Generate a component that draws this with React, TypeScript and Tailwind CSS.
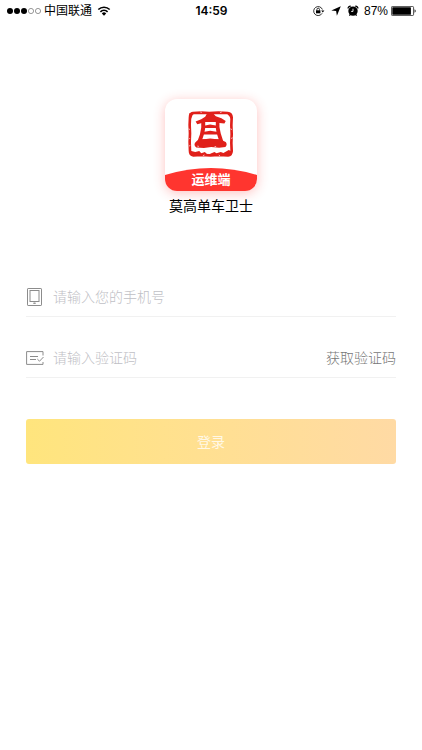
import React, { useState } from 'react';

const StatusBar: React.FC = () => (
  <header className="grid h-[22px] grid-cols-3 items-center pl-[7px] pr-[6px] text-xs text-black">
    <div className="flex items-center gap-[3px]">
      <svg width="34" height="8" viewBox="0 0 34 8" aria-hidden="true">
        <circle cx="3" cy="4" r="3" />
        <circle cx="10" cy="4" r="3" />
        <circle cx="17" cy="4" r="3" />
        <circle cx="24" cy="4" r="2.6" fill="none" stroke="#555" strokeWidth="0.6" />
        <circle cx="31" cy="4" r="2.6" fill="none" stroke="#555" strokeWidth="0.6" />
      </svg>
      <span className="whitespace-nowrap">中国联通</span>
      <svg width="14" height="10" viewBox="0 0 13 10" className="ml-[2px]" aria-hidden="true">
        <path d="M6.5 9.8 4.3 7.4a3.1 3.1 0 0 1 4.4 0Z" />
        <path d="M2.9 5.8a5.2 5.2 0 0 1 7.2 0M.8 3.5a8.2 8.2 0 0 1 11.4 0" fill="none" stroke="#000" strokeWidth="1.6" />
      </svg>
    </div>
    <span className="text-center font-[Inter] font-semibold">14:59</span>
    <div className="flex items-center justify-end">
      <svg width="12" height="10" viewBox="0 0 12 10" className="mr-[6px]" aria-hidden="true">
        <path d="M9.1 7.3A4.5 4.5 0 1 1 9.4 3.5" fill="none" stroke="#000" strokeWidth="0.8" />
        <path d="M8.2 4.6h3.2L9.8 6.5Z" />
        <rect x="3" y="4.3" width="4.4" height="3" />
        <path d="M3.9 4.5V3.5a1.3 1.3 0 0 1 2.6 0v1" fill="none" stroke="#000" strokeWidth="0.8" />
      </svg>
      <svg width="10" height="10" viewBox="0 0 9 9" className="mr-[6px]" aria-hidden="true">
        <path d="M8.8.2 5.3 8.8 4.6 4.5.3 4.1Z" />
      </svg>
      <svg width="12" height="12" viewBox="0 0 11 11" className="mr-[5px]" aria-hidden="true">
        <circle cx="5.5" cy="5.6" r="4.3" />
        <path d="M1 3.2A2 2 0 0 1 3.4 1.2M7.6 1.2a2 2 0 0 1 2.4 2M2.9 8.9l-.7.9M8.1 8.9l.7.9" fill="none" stroke="#000" strokeWidth="1.2" />
        <path d="M5.5 3.4v2.5H3.8" fill="none" stroke="#fff" strokeWidth="0.8" />
      </svg>
      <span className="mr-[3px] font-['Liberation_Sans']">87%</span>
      <svg width="25" height="10" viewBox="0 0 25 10" aria-hidden="true">
        <rect x="0.4" y="0.4" width="22.2" height="9.2" rx="1.2" fill="none" stroke="#000" strokeWidth="0.7" />
        <rect x="1.3" y="1.3" width="18.6" height="7.4" rx="0.5" />
        <path d="M23.6 3.3a1.9 1.9 0 0 1 0 3.4Z" />
      </svg>
    </div>
  </header>
);

const SealLogo: React.FC = () => (
  <svg className="mt-[12px] h-[46px] w-[46px]" viewBox="6 5 139 139" fill="#e0201a" aria-hidden="true">
    <path
      d="M21 11 46 10 70 11 98 10 126 11Q137 12 138 24L137 48 138 75 137 102 138 126Q137 138 127 139L100 138 74 139 46 138 22 139Q12 138 12 126L11 99 12 73 11 47 12 24Q12 12 21 11Z"
      fill="none"
      stroke="#e0201a"
      strokeWidth="8"
    />
    {/* roof */}
    <path d="M63 13 83 13 90 21 107 27 120 35 116 43 101 41 90 36H58L48 41 34 45 29 37 46 30 58 22Z" />
    {/* pillars and floors */}
    <path
      fillRule="evenodd"
      d="M46 35 60 31H88L101 36 101 53 105 73 113 98H34L42 76 46 55ZM58 38V49L73 46 90 49V38ZM58 56 56 68 73 65 92 68 90 56ZM54 76 49 91 73 88 99 91 94 76Z"
    />
    {/* base */}
    <path d="M34 94 50 90 98 90 112 95 120 99Q126 107 119 114L100 116 76 114 54 117 31 115Q22 108 28 100Z" />
    <path d="M13 125 28 129 40 126 46 133 57 129 64 136V141L18 140ZM73 134 86 129 92 133 105 129 113 132 129 123 138 127 133 139 76 140ZM10 12 30 9 20 17 15 29 10 30ZM120 9 137 14 136 30 131 21Z" />
    <path
      d="M8 59 12 61M12 87l-3 3M43 8l5 1M103 10l5-2M134 59l5 2M136 88l5-2M51 140l5-2M99 138l4 3M34 111l5 1M86 113l5-1M9 111l4-2"
      stroke="#fff"
      strokeWidth="2"
    />
  </svg>
);

const PhoneIcon: React.FC = () => (
  <svg width="17" height="18" viewBox="0 0 17 18" fill="none" stroke="#8c8c8c" aria-hidden="true">
    <rect x="1.5" y="0.5" width="14" height="17" rx="0.6" />
    <rect x="4" y="2.5" width="9" height="11" />
    <path d="M7.5 15h2l-1 1Z" />
  </svg>
);

const CodeIcon: React.FC = () => (
  <svg width="18" height="14" viewBox="0 0 18 14" fill="none" stroke="#8c8c8c" aria-hidden="true">
    <path d="M17 4.5V.6H.6v12.8H17V11" />
    <path d="M4 5.5h8M4 8.5h6M11.3 8l2.2 2.2L17.5 6" />
  </svg>
);

const App: React.FC = () => {
  const [phone, setPhone] = useState('');
  const [code, setCode] = useState('');

  return (
    <div className="min-h-screen bg-white font-['Liberation_Sans','Noto_Sans_CJK_SC',sans-serif]">
      <StatusBar />
      <main className="px-[26px] pt-[77px]">
        <div className="flex flex-col items-center">
          <div className="flex h-[92px] w-[92px] flex-col items-center justify-between overflow-hidden rounded-xl bg-white shadow-[0_2px_12px_rgba(255,50,45,0.3)]">
            <SealLogo />
            <div className="grid w-full place-items-center">
              <svg className="col-start-1 row-start-1 h-[23px] w-full" viewBox="0 0 92 23" preserveAspectRatio="none" aria-hidden="true">
                <path d="M0 7Q46-7 92 7V23H0Z" fill="#ff352f" />
              </svg>
              <span className="col-start-1 row-start-1 text-[13px] font-bold leading-5 text-white">运维端</span>
            </div>
          </div>
          <h1 className="mt-[5px] text-sm text-black">莫高单车卫士</h1>
        </div>

        <form onSubmit={(e) => e.preventDefault()}>
          <div className="mt-[61px] flex h-10 items-center border-b border-[#f1f1f1]">
            <label htmlFor="phone" aria-label="手机号" className="flex w-[27px] shrink-0">
              <PhoneIcon />
            </label>
            <input
              id="phone"
              type="tel"
              aria-label="手机号"
              value={phone}
              onChange={(e) => setPhone(e.target.value)}
              placeholder="请输入您的手机号"
              className="min-w-0 flex-1 text-sm font-light text-[#555] outline-none placeholder:text-[#c0c0c5]"
            />
          </div>
          <div className="mt-[21px] flex h-10 items-center border-b border-[#f1f1f1]">
            <label htmlFor="code" aria-label="验证码" className="flex w-[27px] shrink-0">
              <CodeIcon />
            </label>
            <input
              id="code"
              type="text"
              aria-label="验证码"
              value={code}
              onChange={(e) => setCode(e.target.value)}
              placeholder="请输入验证码"
              className="min-w-0 flex-1 text-sm font-light text-[#555] outline-none placeholder:text-[#c0c0c5]"
            />
            <button type="button" className="text-sm font-light text-[#777]">
              获取验证码
            </button>
          </div>
          <button
            type="submit"
            className="mt-[41px] h-[45px] w-full rounded-[3px] bg-linear-to-r from-[#ffe57d] to-[#ffdaa4] text-sm text-[#fff8e6]"
          >
            登录
          </button>
        </form>
      </main>
    </div>
  );
};

export default App;
